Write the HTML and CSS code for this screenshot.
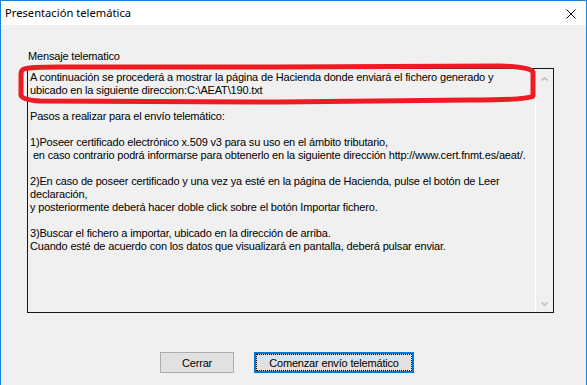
FILE: index.html
```html
<!DOCTYPE html>
<html>
  <head>
    <title>Presentación telemática</title>
    <link rel="stylesheet" href="styles.css">
  </head>
  <body>
    <div class="window">
      <div class="titlebar">
        <span class="title">Presentación telemática</span>
        <svg class="close" width="10" height="10" viewBox="0 0 10 10">
          <path d="M0.5 0.5 L9.5 9.5 M9.5 0.5 L0.5 9.5" stroke="#000" stroke-width="1" fill="none"/>
        </svg>
      </div>
      <div class="content">
        <div class="label">Mensaje telematico</div>
        <div class="textbox">
          <div class="text">A continuación se procederá a mostrar la página de Hacienda donde enviará el fichero generado y
ubicado en la siguiente direccion:C:\AEAT\190.txt

Pasos a realizar para el envío telemático:

1)Poseer certificado electrónico x.509 v3 para su uso en el ámbito tributario,
 en caso contrario podrá informarse para obtenerlo en la siguiente dirección http://www.cert.fnmt.es/aeat/.

2)En caso de poseer certificado y una vez ya esté en la página de Hacienda, pulse el botón de Leer
declaración,
y posteriormente deberá hacer doble click sobre el botón Importar fichero.

3)Buscar el fichero a importar, ubicado en la dirección de arriba.
Cuando esté de acuerdo con los datos que visualizará en pantalla, deberá pulsar enviar.</div>
          <div class="scrollbar">
            <svg class="arrow" width="7" height="4" viewBox="0 0 7 4">
              <path d="M0.5 3.5 L3.5 0.8 L6.5 3.5" stroke="#c2c2c2" stroke-width="1.6" fill="none"/>
            </svg>
            <svg class="arrow" width="7" height="4" viewBox="0 0 7 4">
              <path d="M0.5 0.5 L3.5 3.2 L6.5 0.5" stroke="#c2c2c2" stroke-width="1.6" fill="none"/>
            </svg>
          </div>
        </div>
        <div class="buttons">
          <button class="btn">Cerrar</button>
          <button class="btn default">Comenzar envío telemático</button>
        </div>
      </div>

      <!-- red marker drawn over the first lines -->
      <svg class="marker" width="587" height="385" viewBox="0 0 587 385">
        <path d="M24 69 Q30 67 60 67 L280 67 L500 66 Q530 67 533 72 L533 96 Q528 100 470 100 L280 102 L40 101 Q22 100 21 95 L21 74 Q21 70 24 69 Z"
              stroke="#ed1c24" stroke-width="5" fill="none" stroke-linejoin="round"/>
      </svg>
    </div>
  </body>
</html>
```

FILE: styles.css
```css
* {
  box-sizing: border-box;
}

body {
  margin: 0;
  padding: 0;
  font-family: "Liberation Sans", Arial, sans-serif;
  font-size: 11px;
  color: #000;
  background: #f0f0f0;
}

.window {
  position: relative;
  width: 587px;
  height: 385px;
  border: 1px solid #1a82d9;
  border-bottom: none;
  background: #f0f0f0;
  overflow: hidden;
}

.titlebar {
  height: 24px;
  background: #fff;
  display: flex;
  align-items: center;
  justify-content: space-between;
  padding: 0 10px 0 4px;
}

.title {
  font-family: "Noto Sans", sans-serif;
  font-size: 11.2px;
  padding-bottom: 1px;
}

.close {
  display: block;
  margin-top: 2px;
}

.content {
  padding-top: 25px;
}

.label {
  margin-left: 27px;
  line-height: 13px;
  letter-spacing: -0.17px;
  margin-bottom: 5px;
}

.textbox {
  margin-left: 26px;
  width: 527px;
  height: 245px;
  border: 1px solid #171717;
  display: flex;
}

.text {
  flex: 1;
  padding: 2px 0 0 2px;
  line-height: 13px;
  white-space: pre;
  letter-spacing: -0.17px;
  overflow: hidden;
}

.scrollbar {
  width: 18px;
  border-left: 1px solid #fff;
  display: flex;
  flex-direction: column;
  justify-content: space-between;
  align-items: center;
  padding: 8px 0 6px;
}

.arrow {
  display: block;
}

.buttons {
  display: flex;
  gap: 20px;
  margin-top: 39px;
  padding-left: 159px;
}

.btn {
  height: 21px;
  width: 74px;
  padding: 0;
  font-family: "Liberation Sans", Arial, sans-serif;
  font-size: 11px;
  letter-spacing: -0.17px;
  color: #000;
  background: #e1e1e1;
  border: 1px solid #adadad;
}

.btn.default {
  width: 160px;
  border: 2px solid #0078d7;
  outline: 1px dotted #000;
  outline-offset: -3px;
}

.marker {
  position: absolute;
  top: -1px;
  left: -1px;
  pointer-events: none;
}
```
